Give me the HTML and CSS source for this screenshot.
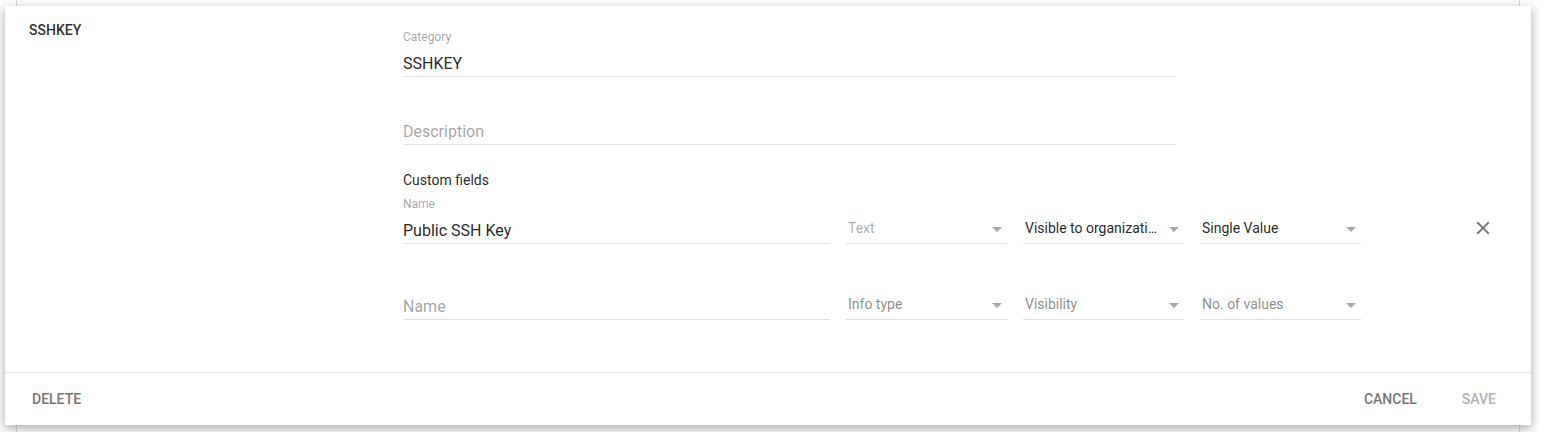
FILE: index.html
```html
<!DOCTYPE html>
<html lang="en">
<head>
<meta charset="utf-8">
<title>SSHKEY</title>
<link rel="stylesheet" href="styles.css">
</head>
<body>
<div class="list">
  <section class="card">
    <div class="body">
      <div class="title">SSHKEY</div>
      <div class="form">
        <div class="field category">
          <div class="label">Category</div>
          <div class="input value">SSHKEY</div>
        </div>
        <div class="field category desc">
          <div class="input placeholder">Description</div>
        </div>
        <div class="section-title">Custom fields</div>
        <div class="row">
          <div class="field name">
            <div class="label">Name</div>
            <div class="input value">Public SSH Key</div>
          </div>
          <div class="select disabled"><span class="sel-text">Text</span><span class="arrow"></span></div>
          <div class="select"><span class="sel-text">Visible to organizati…</span><span class="arrow"></span></div>
          <div class="select"><span class="sel-text">Single Value</span><span class="arrow"></span></div>
          <button class="close" aria-label="Remove">
            <svg viewBox="0 0 24 24" width="22" height="22"><path d="M19 6.41L17.59 5 12 10.59 6.41 5 5 6.41 10.59 12 5 17.59 6.41 19 12 13.41 17.59 19 19 17.59 13.41 12z" fill="#757575"/></svg>
          </button>
        </div>
        <div class="row row2">
          <div class="field name">
            <div class="label empty"></div>
            <div class="input placeholder">Name</div>
          </div>
          <div class="select muted"><span class="sel-text">Info type</span><span class="arrow"></span></div>
          <div class="select muted"><span class="sel-text">Visibility</span><span class="arrow"></span></div>
          <div class="select muted"><span class="sel-text">No. of values</span><span class="arrow"></span></div>
        </div>
      </div>
    </div>
    <footer class="footer">
      <button class="btn">DELETE</button>
      <div class="spacer"></div>
      <button class="btn">CANCEL</button>
      <button class="btn disabled">SAVE</button>
    </footer>
  </section>
</div>
</body>
</html>
```

FILE: styles.css
```css
html, body {
  margin: 0;
  padding: 0;
  background: #fff;
  font-family: Roboto, "Noto Sans", Arial, sans-serif;
  color: rgba(0,0,0,0.87);
  overflow: hidden;
}

.list {
  margin: 0 22px 0 16px;
  border-left: 1px solid #d8d8d8;
  border-right: 1px solid #d8d8d8;
  padding: 6px 0 20px 0;
  min-height: 432px;
  box-sizing: border-box;
}

.card {
  margin: 0 -12px 0 -12px;
  background: #fff;
  box-shadow: 0 3px 10px rgba(0,0,0,0.16), 0 3px 10px rgba(0,0,0,0.2);
}

.body {
  display: grid;
  grid-template-columns: 374px 1fr;
  padding: 14px 24px 52px 24px;
}

.title {
  font-size: 14px;
  line-height: 20px;
  font-weight: 500;
  color: rgba(0,0,0,0.84);
}

.form {
  padding-top: 9px;
}

.field {
  border-bottom: 1px solid #e0e0e0;
}

.category {
  width: 773px;
}

.desc {
  margin-top: 43px;
}

.label {
  font-size: 12px;
  line-height: 16px;
  height: 16px;
  color: rgba(0,0,0,0.38);
  margin-bottom: 7px;
}

.input {
  font-size: 16px;
  line-height: 24px;
  height: 24px;
  white-space: nowrap;
}

.value {
  color: rgba(0,0,0,0.87);
}

.placeholder {
  color: rgba(0,0,0,0.38);
}

.section-title {
  margin-top: 25px;
  font-size: 14px;
  line-height: 20px;
  color: rgba(0,0,0,0.87);
}

.row {
  display: flex;
  align-items: flex-end;
  gap: 16px;
  margin-top: 6px;
}

.row2 {
  margin-top: 28px;
}

.name {
  width: 427px;
}

.select {
  width: 161px;
  box-sizing: border-box;
  display: flex;
  align-items: center;
  padding: 0 5px 3px 2px;
  border-bottom: 1px solid #e0e0e0;
  font-size: 14px;
  line-height: 24px;
  height: 28px;
  color: rgba(0,0,0,0.87);
}

.select.muted {
  color: rgba(0,0,0,0.48);
}

.select.disabled {
  color: rgba(0,0,0,0.34);
}

.sel-text {
  flex: 1;
  white-space: nowrap;
  overflow: hidden;
}

.arrow {
  width: 0;
  height: 0;
  border-left: 5px solid transparent;
  border-right: 5px solid transparent;
  border-top: 5px solid #a8a8a8;
  margin-top: 3px;
}

.close {
  margin: 0 0 5px 95px;
  padding: 0;
  border: 0;
  background: none;
  width: 22px;
  height: 22px;
  display: block;
  cursor: pointer;
}

.close svg {
  display: block;
}

.footer {
  border-top: 1px solid #e0e0e0;
  height: 52px;
  display: flex;
  align-items: center;
  padding: 0 27px 0 19px;
  gap: 29px;
}

.spacer {
  flex: 1;
}

.btn {
  font-family: Roboto, "Noto Sans", Arial, sans-serif;
  font-size: 14px;
  font-weight: 500;
  line-height: 36px;
  padding: 0 8px;
  border: 0;
  background: none;
  color: #757575;
  cursor: pointer;
}

.btn.disabled {
  color: #b0b0b0;
}
```
